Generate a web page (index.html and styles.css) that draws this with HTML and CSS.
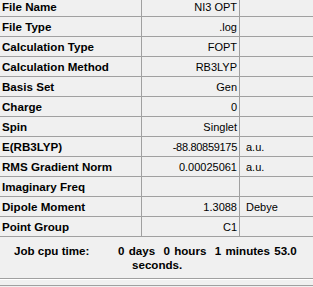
FILE: index.html
```html
<!DOCTYPE html>
<html lang="en">
<head>
    <meta charset="UTF-8">
    <title>Summary</title>
    <link rel="stylesheet" href="styles.css">
</head>
<body>
    <div class="panel">
        <!-- property / value / unit grid -->
        <div class="props">
            <div class="row"><div class="name">File Name</div><div class="val">NI3 OPT</div><div class="unit"></div></div>
            <div class="row"><div class="name">File Type</div><div class="val">.log</div><div class="unit"></div></div>
            <div class="row"><div class="name">Calculation Type</div><div class="val">FOPT</div><div class="unit"></div></div>
            <div class="row"><div class="name">Calculation Method</div><div class="val">RB3LYP</div><div class="unit"></div></div>
            <div class="row"><div class="name">Basis Set</div><div class="val">Gen</div><div class="unit"></div></div>
            <div class="row"><div class="name">Charge</div><div class="val">0</div><div class="unit"></div></div>
            <div class="row"><div class="name">Spin</div><div class="val">Singlet</div><div class="unit"></div></div>
            <div class="row"><div class="name">E(RB3LYP)</div><div class="val num">-88.80859175</div><div class="unit">a.u.</div></div>
            <div class="row"><div class="name">RMS Gradient Norm</div><div class="val">0.00025061</div><div class="unit">a.u.</div></div>
            <div class="row"><div class="name">Imaginary Freq</div><div class="val"></div><div class="unit"></div></div>
            <div class="row"><div class="name">Dipole Moment</div><div class="val">1.3088</div><div class="unit">Debye</div></div>
            <div class="row"><div class="name">Point Group</div><div class="val">C1</div><div class="unit"></div></div>
        </div>

        <!-- cpu time footer -->
        <div class="cpu">
            <div class="cpu-label">Job cpu time:</div>
            <div class="cpu-text">
                <div>0 days&nbsp; 0 hours&nbsp; 1 minutes 53.0</div>
                <div class="cpu-second">seconds.</div>
            </div>
        </div>
        <div class="rule"></div>
    </div>
</body>
</html>
```
FILE: styles.css
```css
body {
    margin: 0;
    padding: 0;
    background-color: #f0f0f0;
    font-family: "Liberation Sans", Arial, sans-serif;
    font-size: 11px;
    color: #000;
    overflow: hidden;
}
.panel {
    width: 313px;
    height: 287px;
    overflow: hidden;
}
.props {
    margin-top: -3px;
}
.row {
    display: grid;
    grid-template-columns: 142px 98px 1fr;
    height: 20px;
    box-sizing: border-box;
    border-bottom: 1px solid #a0a0a0;
}
.row > div {
    display: flex;
    align-items: center;
    white-space: nowrap;
}
.name {
    font-weight: bold;
    font-size: 11.6px;
    padding-left: 2px;
    border-right: 1px solid #a0a0a0;
}
.val {
    justify-content: flex-end;
    padding-right: 2px;
    border-right: 1px solid #a0a0a0;
}
.num {
    letter-spacing: -0.3px;
}
.unit {
    padding-left: 6px;
}
.cpu {
    display: flex;
    font-weight: bold;
    font-size: 11.6px;
    height: 41px;
    padding-top: 7px;
    box-sizing: border-box;
    line-height: 14px;
    white-space: nowrap;
}
.cpu-label {
    width: 118px;
    padding-left: 14px;
    box-sizing: border-box;
}
.cpu-text {
    word-spacing: 1px;
}
.cpu-second {
    padding-left: 14px;
}
.rule {
    height: 6px;
    border-top: 1px solid #a0a0a0;
    border-bottom: 1px solid #a0a0a0;
    box-shadow: inset 0 1px 0 #fff;
}
```
